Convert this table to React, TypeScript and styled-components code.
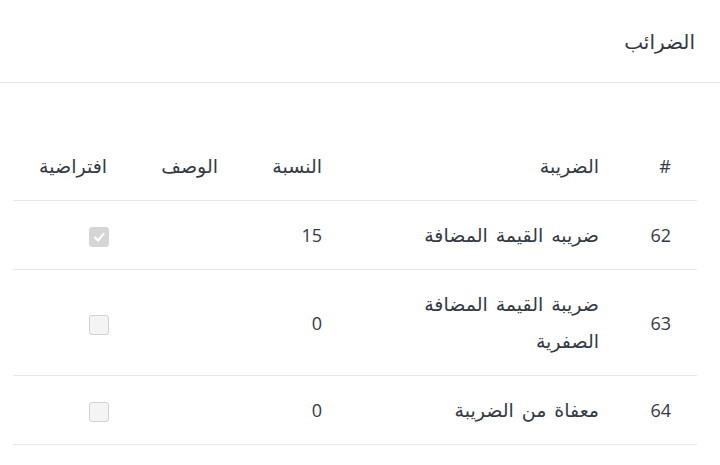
import React from "react";
import styled, { createGlobalStyle, css } from "styled-components";

const Global = createGlobalStyle`
  html, body { margin: 0; padding: 0; background: #ffffff; }
  body { font-family: "Open Sans", "DejaVu Sans", sans-serif; color: #343a44; }
`;

const Page = styled.div`
  direction: rtl;
  width: 720px;
  min-height: 465px;
  background: #fff;
`;

const Header = styled.header`
  height: 83px;
  display: flex;
  align-items: center;
  padding: 0 25px;
  border-bottom: 1px solid #e6e8ec;
  box-sizing: border-box;
`;

const Title = styled.h1`
  margin: 0;
  font-size: 20px;
  font-weight: 400;
  color: #333a44;
`;

const Body = styled.div`
  padding: 50px 23px 0 13px;
`;

const Table = styled.table`
  width: 684px;
  border-collapse: collapse;
  table-layout: fixed;
  font-size: 18px;
`;

const arabic = css<{ $ar?: boolean }>`
  ${(p) =>
    p.$ar &&
    css`
      font-size: 19px;
      word-spacing: 3px;
    `}
`;

const Th = styled.th<{ $w: number; $ar?: boolean }>`
  box-sizing: border-box;
  width: ${(p) => p.$w}px;
  text-align: right;
  font-weight: 400;
  padding: 15px 26px;
  line-height: 37px;
  border-bottom: 1px solid #e6e8ec;
  color: #333a44;
  ${arabic}
`;

const Td = styled.td<{ $ar?: boolean }>`
  text-align: right;
  padding: 16px 26px 15px;
  line-height: 37px;
  border-bottom: 1px solid #e6e8ec;
  vertical-align: middle;
  color: #333a44;
  ${arabic}
`;

const Box = styled.span<{ $checked: boolean }>`
  display: inline-flex;
  align-items: center;
  justify-content: center;
  width: 20px;
  height: 20px;
  box-sizing: border-box;
  border-radius: 3px;
  vertical-align: middle;
  margin-right: -2px;
  background: ${(p) => (p.$checked ? "#d5d5d5" : "#f4f4f4")};
  border: 1px solid ${(p) => (p.$checked ? "#d5d5d5" : "#d2d2d2")};
`;

const Check = ({ checked }: { checked: boolean }) => (
  <Box $checked={checked}>
    {checked && (
      <svg width="14" height="14" viewBox="0 0 14 14">
        <path d="M3 7.5 L6 10.5 L11.5 4" fill="none" stroke="#fff" strokeWidth="2.2" strokeLinecap="round" strokeLinejoin="round" />
      </svg>
    )}
  </Box>
);

const rows = [
  { id: 62, name: "ضريبه القيمة المضافة", rate: "15", desc: "", def: true },
  { id: 63, name: "ضريبة القيمة المضافة الصفرية", rate: "0", desc: "", def: false },
  { id: 64, name: "معفاة من الضريبة", rate: "0", desc: "", def: false },
];

export default function App() {
  return (
    <Page>
      <Global />
      <Header>
        <Title>الضرائب</Title>
      </Header>
      <Body>
        <Table>
          <thead>
            <tr>
              <Th $w={72}>#</Th>
              <Th $w={277} $ar>الضريبة</Th>
              <Th $w={104} $ar>النسبة</Th>
              <Th $w={111} $ar>الوصف</Th>
              <Th $w={120} $ar>افتراضية</Th>
            </tr>
          </thead>
          <tbody>
            {rows.map((r) => (
              <tr key={r.id}>
                <Td>{r.id}</Td>
                <Td $ar>{r.name}</Td>
                <Td>{r.rate}</Td>
                <Td>{r.desc}</Td>
                <Td>
                  <Check checked={r.def} />
                </Td>
              </tr>
            ))}
          </tbody>
        </Table>
      </Body>
    </Page>
  );
}
